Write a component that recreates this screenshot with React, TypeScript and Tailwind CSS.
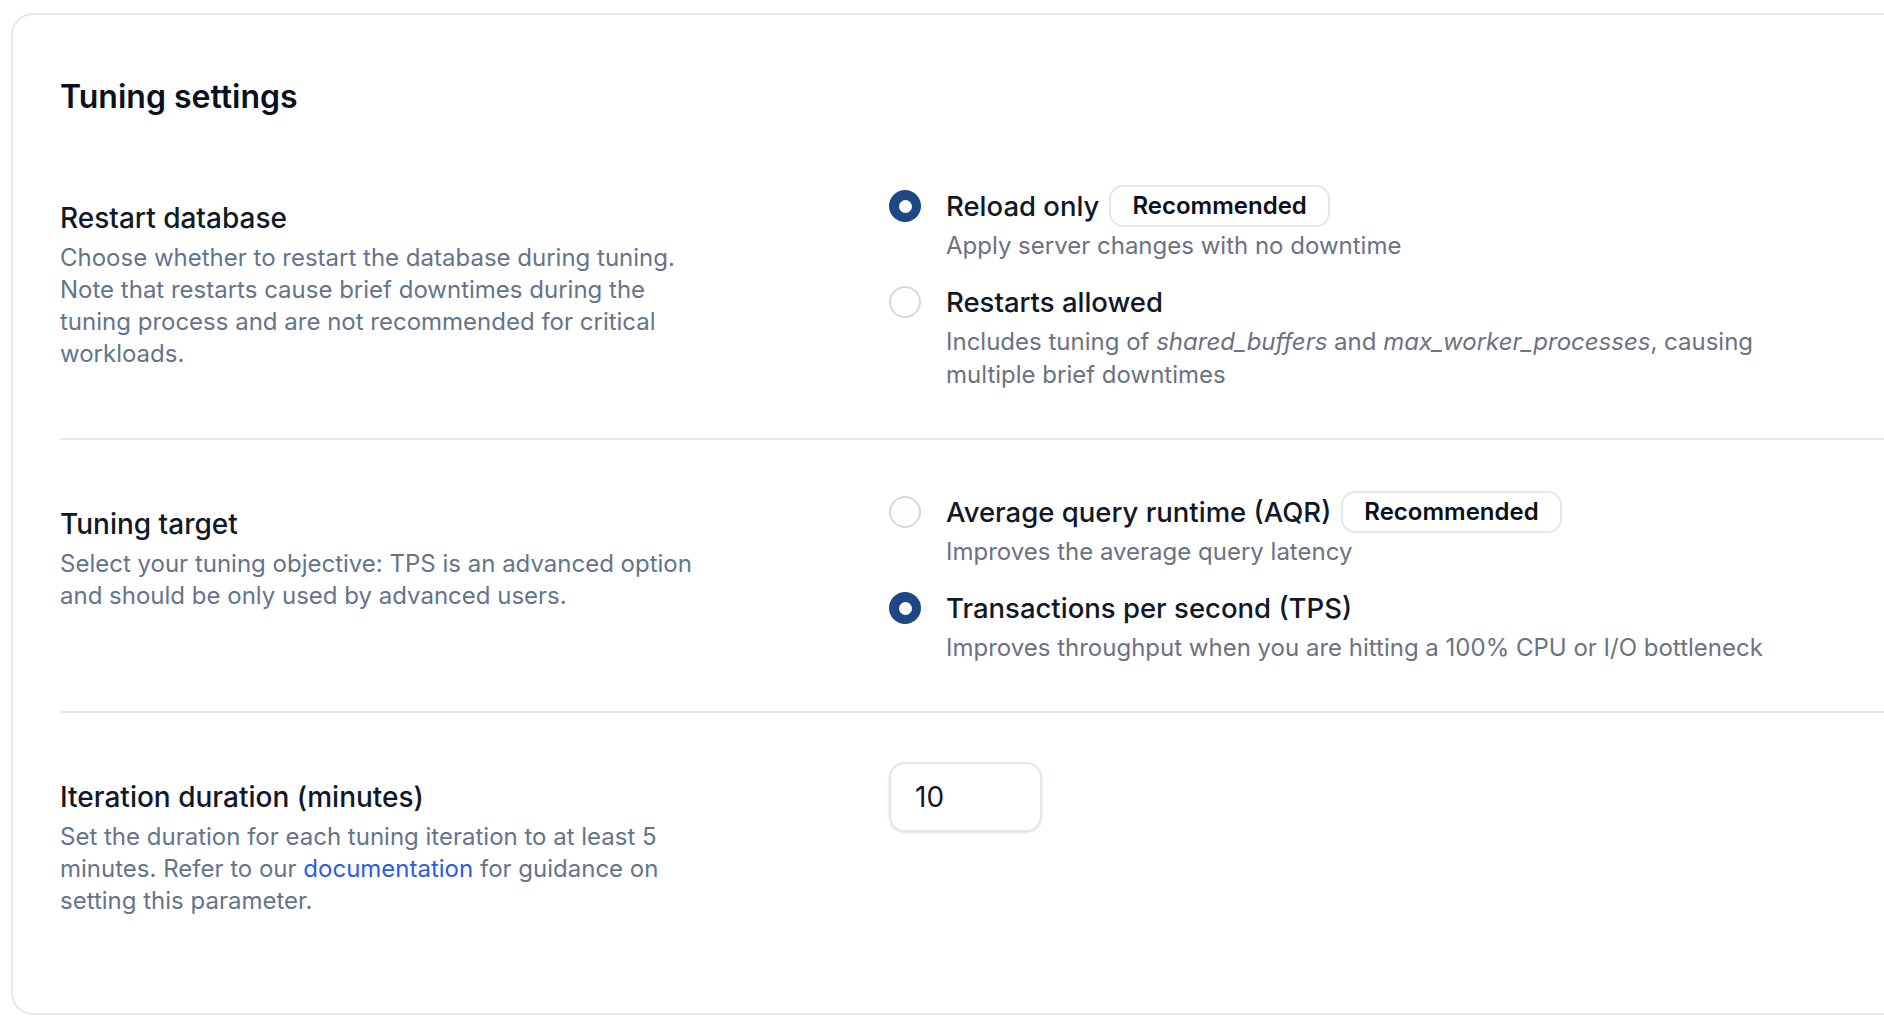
import { useState } from 'react';

type Option = {
  id: string;
  label: string;
  recommended?: boolean;
  description: React.ReactNode;
};

function Radio({ checked }: { checked: boolean }) {
  return checked ? (
    <span className="flex h-[32px] w-[32px] shrink-0 items-center justify-center rounded-full bg-[#1e4786]">
      <span className="block h-[13px] w-[13px] rounded-full bg-white" />
    </span>
  ) : (
    <span className="block h-[32px] w-[32px] shrink-0 rounded-full border-2 border-[#d6d9de] bg-white" />
  );
}

function RadioGroup({
  options,
  value,
  onChange,
}: {
  options: Option[];
  value: string;
  onChange: (v: string) => void;
}) {
  return (
    <div className="flex flex-col gap-[19px]">
      {options.map((o) => (
        <button key={o.id} type="button" onClick={() => onChange(o.id)} className="flex items-start gap-[25px] text-left">
          <span className="flex h-[42px] items-center">
            <Radio checked={value === o.id} />
          </span>
          <span className="flex flex-col">
            <span className="flex h-[42px] items-center gap-[10px]">
              <span className="text-[27.5px] font-medium leading-[40px] text-[#111827]">{o.label}</span>
              {o.recommended && (
                <span className="flex h-[42px] items-center rounded-[14px] border-2 border-[#e5e7eb] px-[21px] text-[24px] font-semibold text-[#0b0f19]">
                  Recommended
                </span>
              )}
            </span>
            <span className="mt-[2px] max-w-[860px] text-[24px] leading-[33px] text-[#6b7280]">{o.description}</span>
          </span>
        </button>
      ))}
    </div>
  );
}

function Section({
  title,
  children,
  control,
  last,
}: {
  title: string;
  children: React.ReactNode;
  control: React.ReactNode;
  last?: boolean;
}) {
  return (
    <div
      className={`grid grid-cols-[829px_1fr] ${last ? 'pt-[49px]' : 'border-b-2 border-[#e7e8eb] pb-[47px] pt-[51px]'}`}
    >
      <div className={`max-w-[660px] ${last ? 'pt-[15px]' : 'pt-[13px]'}`}>
        <h3 className="text-[28px] font-medium leading-[40px] text-[#111827]">{title}</h3>
        <p className="mt-[4px] text-[24px] leading-[32px] text-[#64748b]">{children}</p>
      </div>
      <div>{control}</div>
    </div>
  );
}

export default function App() {
  const [restart, setRestart] = useState('reload');
  const [target, setTarget] = useState('tps');
  const [duration, setDuration] = useState('10');

  return (
    <div className="min-h-screen bg-white pl-[11px] pt-[13px] font-['Inter',sans-serif]">
      <div className="rounded-l-[22px] border-2 border-r-0 border-[#e7e8eb] pb-[96px] pl-[47px]">
        <h2 className="pt-[60px] text-[32px] font-semibold leading-[44px] text-[#0b1020]">Tuning settings</h2>

        <div className="mt-[15px]">
          <Section
            title="Restart database"
            control={
              <RadioGroup
                value={restart}
                onChange={setRestart}
                options={[
                  {
                    id: 'reload',
                    label: 'Reload only',
                    recommended: true,
                    description: 'Apply server changes with no downtime',
                  },
                  {
                    id: 'restart',
                    label: 'Restarts allowed',
                    description: (
                      <>
                        Includes tuning of <em>shared_buffers</em> and <em>max_worker_processes</em>, causing multiple
                        brief downtimes
                      </>
                    ),
                  },
                ]}
              />
            }
          >
            Choose whether to restart the database during tuning. Note that restarts cause brief downtimes during the
            tuning process and are not recommended for critical workloads.
          </Section>

          <Section
            title="Tuning target"
            control={
              <RadioGroup
                value={target}
                onChange={setTarget}
                options={[
                  {
                    id: 'aqr',
                    label: 'Average query runtime (AQR)',
                    recommended: true,
                    description: 'Improves the average query latency',
                  },
                  {
                    id: 'tps',
                    label: 'Transactions per second (TPS)',
                    description: 'Improves throughput when you are hitting a 100% CPU or I/O bottleneck',
                  },
                ]}
              />
            }
          >
            Select your tuning objective: TPS is an advanced option and should be only used by advanced users.
          </Section>

          <Section
            title="Iteration duration (minutes)"
            last
            control={
              <input
                value={duration}
                onChange={(e) => setDuration(e.target.value)}
                className="h-[70px] w-[153px] rounded-[16px] border-2 border-[#e2e6ee] px-[24px] text-[28px] text-[#111827] shadow-sm outline-none"
              />
            }
          >
            Set the duration for each tuning iteration to at least 5 minutes. Refer to our{' '}
            <a href="#" className="text-[#2b5ce6]">
              documentation
            </a>{' '}
            for guidance on setting this parameter.
          </Section>
        </div>
      </div>
    </div>
  );
}
